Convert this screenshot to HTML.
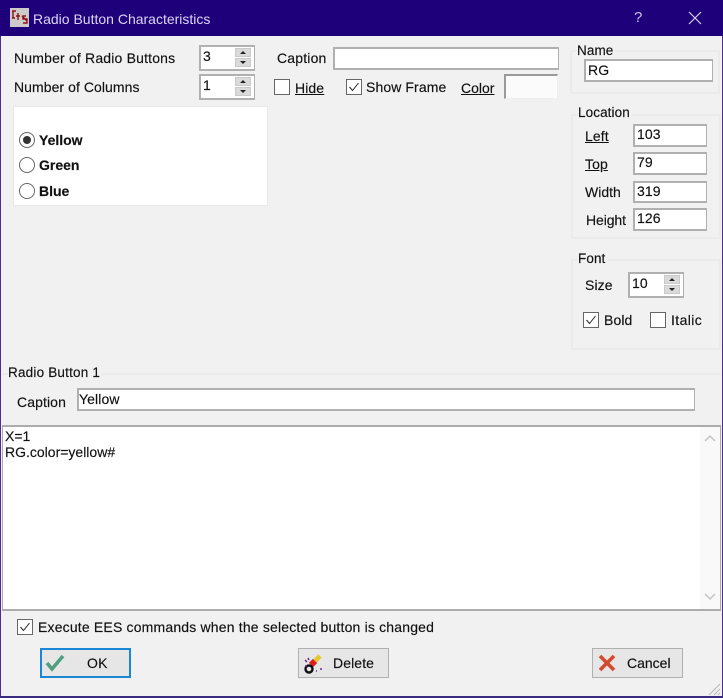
<!DOCTYPE html>
<html><head><meta charset="utf-8"><style>
html,body{margin:0;padding:0}
body{width:723px;height:698px;overflow:hidden;position:relative;background:#f1f1f1;font-family:"Liberation Sans",sans-serif;font-size:14px;color:#111}
.t{position:absolute;white-space:nowrap;line-height:16px;letter-spacing:.18px;-webkit-text-stroke:.15px #111}
.i{position:absolute;background:#fff;border:2px solid #b0b0b0;border-right-width:1px;border-bottom-width:2px;box-sizing:border-box;font-size:14px;line-height:16px;padding-left:2px;letter-spacing:.1px;-webkit-text-stroke:.15px #111}
.g{position:absolute;border:2px solid #ebebeb;box-sizing:border-box}
.c{position:absolute;width:16px;height:16px;box-sizing:border-box;border:1px solid #666;background:#fff}
.c svg{position:absolute;left:0;top:0}
.r{position:absolute;width:16px;height:16px;box-sizing:border-box;border:1px solid #666;border-radius:50%;background:#fff}
.b{position:absolute;background:#e6e6e6;border:1px solid #b0b0b0;box-sizing:border-box}
.s{position:absolute;width:16px;height:9px;background:#dadada;border:1px solid #cacaca;box-sizing:border-box}
.u{text-decoration:underline}
.bd{font-weight:bold;letter-spacing:0}
</style></head><body>
<div style="position:absolute;left:0;top:0;width:723px;height:36px;background:#1f007b"></div>
<div style="position:absolute;left:0;top:36px;width:1px;height:662px;background:#4b2a9c"></div>
<div style="position:absolute;right:0;top:36px;width:1px;height:662px;background:#4b2a9c"></div>
<div style="position:absolute;left:0;top:696px;width:723px;height:2px;background:#3a2a80"></div>
<svg style="position:absolute;left:10px;top:8px" width="19" height="19" viewBox="0 0 19 19"><rect width="19" height="19" fill="#cfcaca"/><path d="M2 3h4M3 3v7M2 10h3M8 5v7M10 8h-4M12 8l5 5M16 8h-3v3h4v4h-4" stroke="#8c1414" stroke-width="1.4" fill="none"/></svg>
<div class="t" style="left:33px;top:11px;color:#dcd6f4;font-size:14px;letter-spacing:0;-webkit-text-stroke:0">Radio Button Characteristics</div>
<div class="t" style="left:634px;top:10px;color:#c9c3e6;font-size:15px;-webkit-text-stroke:0">?</div>
<svg style="position:absolute;left:688px;top:11px" width="14" height="14"><path d="M1 1L13 13M13 1L1 13" stroke="#d8d4ee" stroke-width="1.2"/></svg>

<div class="t" style="left:14px;top:50px">Number of Radio Buttons</div>
<div class="t" style="left:14px;top:79px;letter-spacing:.06px">Number of Columns</div>
<div class="i" style="left:199px;top:45px;width:56px;height:26px;padding-top:1px">3</div>
<div class="s" style="left:235px;top:48px"></div><div class="s" style="left:235px;top:58px"></div>
<div class="i" style="left:199px;top:74px;width:56px;height:26px;padding-top:1px">1</div>
<div class="s" style="left:235px;top:77px"></div><div class="s" style="left:235px;top:87px"></div>
<svg style="position:absolute;left:235px;top:48px" width="16" height="50" fill="#222"><path d="M5 6l3-3 3 3zM5 13l3 3 3-3zM5 35l3-3 3 3zM5 42l3 3 3-3z"/></svg>

<div style="position:absolute;left:13px;top:106px;width:255px;height:100px;background:#fff;border:1px solid #e8e8e8;box-sizing:border-box"></div>
<div class="r" style="left:19px;top:132px"></div>
<div style="position:absolute;left:23px;top:136px;width:8px;height:8px;border-radius:50%;background:#333"></div>
<div class="r" style="left:19px;top:157px"></div>
<div class="r" style="left:19px;top:183px"></div>
<div class="t bd" style="left:39px;top:132px">Yellow</div>
<div class="t bd" style="left:39px;top:157px">Green</div>
<div class="t bd" style="left:39px;top:183px">Blue</div>

<div class="t" style="left:277px;top:50px">Caption</div>
<div class="i" style="left:333px;top:47px;width:226px;height:23px"></div>
<div class="c" style="left:274px;top:79px"></div>
<div class="t u" style="left:295px;top:80px;letter-spacing:.1px">Hide</div>
<div class="c" style="left:346px;top:79px"><svg width="14" height="14"><path d="M2.5 7L5.5 10.5L11.5 3" stroke="#222" fill="none"/></svg></div>
<div class="t" style="left:366px;top:79px;letter-spacing:.1px">Show Frame</div>
<div class="t u" style="left:461px;top:80px;letter-spacing:0">Color</div>
<div style="position:absolute;left:504px;top:74px;width:54px;height:25px;box-sizing:border-box;background:#fbfbfb;border-left:2px solid #9a9a9a;border-top:2px solid #9a9a9a;border-right:1px solid #eee;border-bottom:1px solid #eee"></div>

<div class="g" style="left:570px;top:50px;width:150px;height:44px"></div>
<div class="t" style="left:577px;top:43px;background:#f1f1f1;padding-right:2px;letter-spacing:.1px;font-size:13.5px">Name</div>
<div class="i" style="left:584px;top:59px;width:129px;height:23px;padding-top:1px">RG</div>

<div class="g" style="left:571px;top:114px;width:150px;height:125px"></div>
<div class="t" style="left:578px;top:105px;background:#f1f1f1;padding-right:2px;font-size:13.5px;letter-spacing:.1px">Location</div>
<div class="t u" style="left:585px;top:128px;letter-spacing:.1px">Left</div>
<div class="t u" style="left:585px;top:156px;letter-spacing:.1px">Top</div>
<div class="t" style="left:585px;top:184px;letter-spacing:0">Width</div>
<div class="t" style="left:586px;top:212px;letter-spacing:-.1px">Height</div>
<div class="i" style="left:633px;top:124px;width:74px;height:23px">103</div>
<div class="i" style="left:633px;top:152px;width:74px;height:23px">79</div>
<div class="i" style="left:633px;top:181px;width:74px;height:22px">319</div>
<div class="i" style="left:633px;top:208px;width:74px;height:23px">126</div>

<div class="g" style="left:571px;top:259px;width:150px;height:91px"></div>
<div class="t" style="left:578px;top:251px;background:#f1f1f1;padding-right:2px;font-size:13.5px;letter-spacing:.1px">Font</div>
<div class="t" style="left:585px;top:277px;letter-spacing:.1px">Size</div>
<div class="i" style="left:628px;top:272px;width:56px;height:26px;padding-top:1px">10</div>
<div class="s" style="left:664px;top:275px"></div><div class="s" style="left:664px;top:285px"></div>
<svg style="position:absolute;left:664px;top:275px" width="16" height="20" fill="#222"><path d="M5 6l3-3 3 3zM5 13l3 3 3-3z"/></svg>
<div class="c" style="left:583px;top:312px"><svg width="14" height="14"><path d="M2.5 7L5.5 10.5L11.5 3" stroke="#222" fill="none"/></svg></div>
<div class="t" style="left:604px;top:312px;letter-spacing:.1px">Bold</div>
<div class="c" style="left:650px;top:312px"></div>
<div class="t" style="left:671px;top:312px;letter-spacing:.4px">Italic</div>

<div style="position:absolute;left:2px;top:373px;width:719px;height:2px;background:#eaeaea"></div>
<div class="t" style="left:8px;top:365px;background:#f1f1f1;padding-right:2px;font-size:13.5px;letter-spacing:.2px">Radio Button 1</div>
<div class="t" style="left:17px;top:394px;letter-spacing:.1px">Caption</div>
<div class="i" style="left:77px;top:388px;width:618px;height:23px;padding-left:0;padding-top:1px">Yellow</div>

<div style="position:absolute;left:2px;top:425px;width:719px;height:186px;background:#fff;border:2px solid #acacac;border-left-width:1px;border-right-width:1px;box-sizing:border-box"></div>
<div style="position:absolute;left:700px;top:427px;width:20px;height:182px;background:#f9f9f9"></div>
<svg style="position:absolute;left:700px;top:427px" width="20" height="183" fill="none" stroke="#c4c4c4" stroke-width="1.5"><path d="M5 14l5-5 5 5M5 167l5 5 5-5"/></svg>
<div class="t" style="left:5px;top:428px;letter-spacing:0;font-size:14px">X=1</div>
<div class="t" style="left:5px;top:444px;letter-spacing:0;font-size:14px">RG.color=yellow#</div>

<div class="c" style="left:17px;top:619px"><svg width="14" height="14"><path d="M2.5 7L5.5 10.5L11.5 3" stroke="#222" fill="none"/></svg></div>
<div class="t" style="left:38px;top:619px">Execute EES commands when the selected button is changed</div>

<div class="b" style="left:40px;top:648px;width:91px;height:30px;border:2px solid #1a86d6"></div>
<svg style="position:absolute;left:45px;top:653px" width="20" height="20"><path d="M2 10L7 16L18 3" stroke="#4f9e80" stroke-width="3.5" fill="none"/></svg>
<div class="t" style="left:87px;top:655px;letter-spacing:.2px">OK</div>

<div class="b" style="left:298px;top:648px;width:91px;height:30px"></div>
<svg style="position:absolute;left:302px;top:652px" width="22" height="22"><path d="M9 13L18 4" stroke="#e4c82a" stroke-width="4.5"/><path d="M9 13L13 9" stroke="#d81e1e" stroke-width="6"/><circle cx="7" cy="17" r="3.5" fill="none" stroke="#111" stroke-width="2.4"/><path d="M3 8l2 2M6 6l1 2M3 14h2M19 16v2M14 19h1" stroke="#6a2a90" stroke-width="1.5"/></svg>
<div class="t" style="left:333px;top:655px;letter-spacing:.1px">Delete</div>

<div class="b" style="left:592px;top:648px;width:91px;height:30px"></div>
<svg style="position:absolute;left:598px;top:654px" width="18" height="18"><path d="M2 2L16 16M16 2L2 16" stroke="#d34a2e" stroke-width="3.6"/></svg>
<div class="t" style="left:627px;top:655px;letter-spacing:0">Cancel</div>

<svg style="position:absolute;left:706px;top:681px" width="15" height="15" stroke="#b8b8b8"><path d="M3 14L14 3M8 14L14 8M12 14L14 12"/></svg>
</body></html>
